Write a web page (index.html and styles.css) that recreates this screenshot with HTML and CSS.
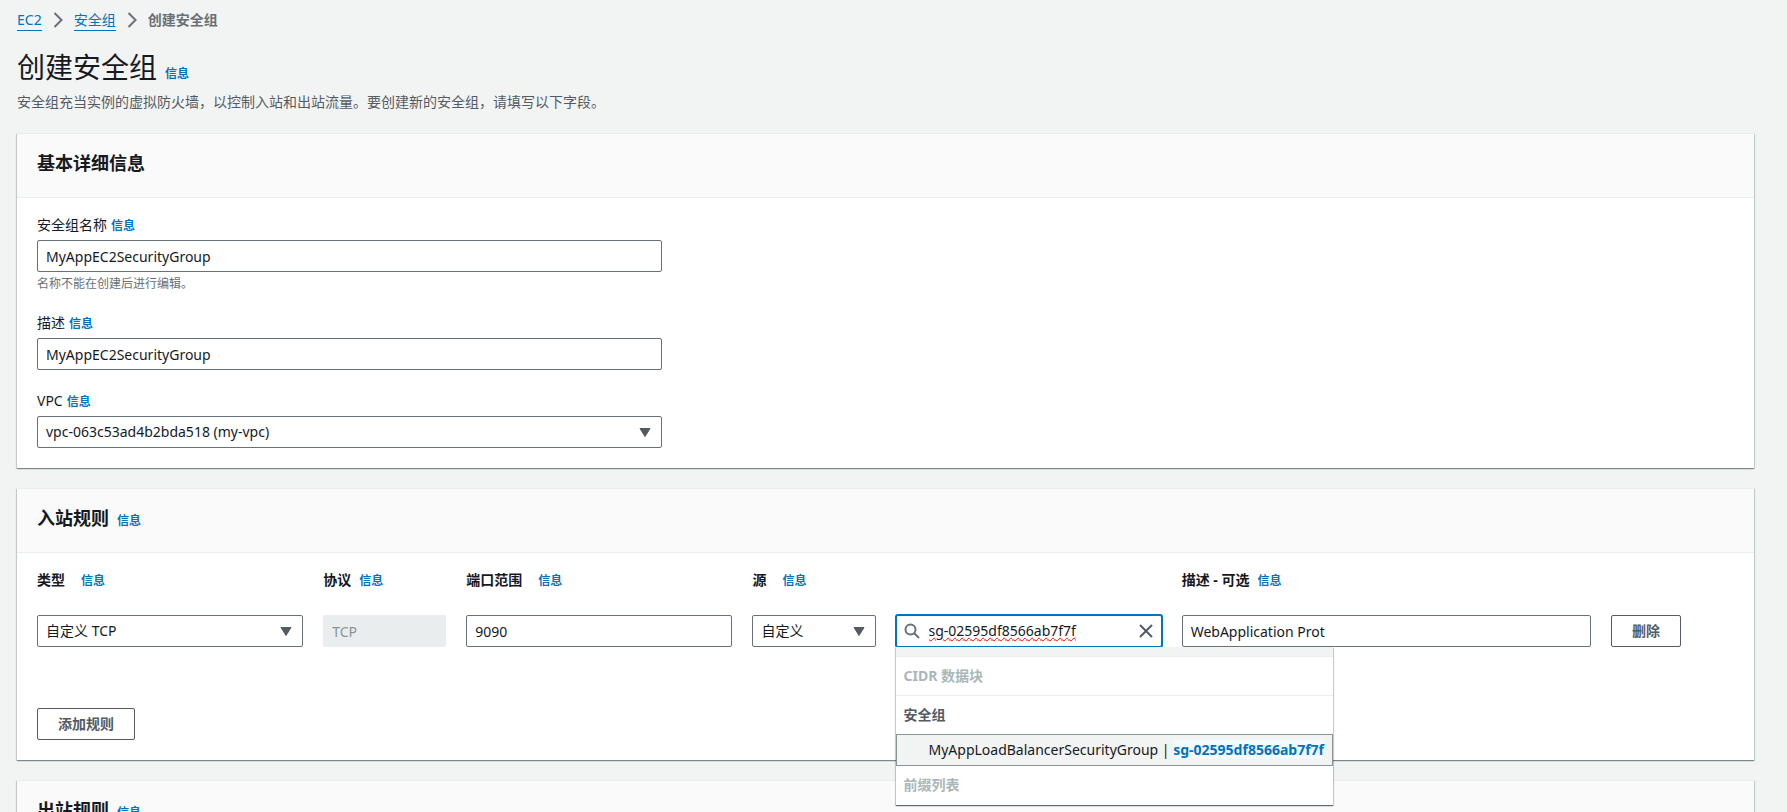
FILE: index.html
```html
<!DOCTYPE html>
<html lang="zh-CN">
  <head>
    <meta charset="UTF-8" />
    <meta name="viewport" content="width=device-width, initial-scale=1.0" />
    <title>创建安全组</title>
    <link rel="stylesheet" href="styles.css">
  </head>

  <body>
    <main class="page">
      <nav class="breadcrumb">
        <a href="#">EC2</a>
        <svg class="chevron" viewBox="0 0 10 16"><path d="M1.5 1 L8.5 8 L1.5 15" /></svg>
        <a href="#">安全组</a>
        <svg class="chevron" viewBox="0 0 10 16"><path d="M1.5 1 L8.5 8 L1.5 15" /></svg>
        <span class="current">创建安全组</span>
      </nav>

      <header class="page-header">
        <div class="title">
          <h1>创建安全组</h1>
          <a class="info" href="#">信息</a>
        </div>
        <p>安全组充当实例的虚拟防火墙，以控制入站和出站流量。要创建新的安全组，请填写以下字段。</p>
      </header>

      <section class="panel">
        <div class="panel-header">
          <h2>基本详细信息</h2>
        </div>
        <div class="panel-body details">
          <div class="form-group">
            <div class="label-row">
              <label for="group-name">安全组名称</label>
              <a class="info" href="#">信息</a>
            </div>
            <input class="control" type="text" id="group-name" value="MyAppEC2SecurityGroup" spellcheck="false" />
            <p class="hint">名称不能在创建后进行编辑。</p>
          </div>
          <div class="form-group">
            <div class="label-row">
              <label for="group-desc">描述</label>
              <a class="info" href="#">信息</a>
            </div>
            <input class="control" type="text" id="group-desc" value="MyAppEC2SecurityGroup" spellcheck="false" />
          </div>
          <div class="form-group">
            <div class="label-row">
              <label for="vpc">VPC</label>
              <a class="info" href="#">信息</a>
            </div>
            <div class="select">
              <select class="control" id="vpc">
                <option>vpc-063c53ad4b2bda518 (my-vpc)</option>
              </select>
              <svg class="caret" viewBox="0 0 12 9"><path d="M1 0.5 H11 L6 8.5 Z" /></svg>
            </div>
          </div>
        </div>
      </section>

      <section class="panel">
        <div class="panel-header">
          <h2>入站规则</h2>
          <a class="info" href="#">信息</a>
        </div>
        <div class="panel-body">
          <div class="rules">
            <div class="rule-label wide span-2">
              <label for="rule-type">类型</label>
              <a class="info" href="#">信息</a>
            </div>
            <div class="rule-label">
              <label for="rule-protocol">协议</label>
              <a class="info" href="#">信息</a>
            </div>
            <div class="rule-label wide span-2">
              <label for="rule-port">端口范围</label>
              <a class="info" href="#">信息</a>
            </div>
            <div class="rule-label wide span-3">
              <label for="rule-source">源</label>
              <a class="info" href="#">信息</a>
            </div>
            <div class="rule-label span-4">
              <label for="rule-desc">描述 - 可选</label>
              <a class="info" href="#">信息</a>
            </div>

            <div class="select span-2">
              <select class="control" id="rule-type">
                <option>自定义 TCP</option>
              </select>
              <svg class="caret" viewBox="0 0 12 9"><path d="M1 0.5 H11 L6 8.5 Z" /></svg>
            </div>
            <input class="control" type="text" id="rule-protocol" value="TCP" disabled />
            <input class="control span-2" type="text" id="rule-port" value="9090" />
            <div class="select">
              <select class="control" id="rule-source">
                <option>自定义</option>
              </select>
              <svg class="caret" viewBox="0 0 12 9"><path d="M1 0.5 H11 L6 8.5 Z" /></svg>
            </div>
            <div class="search span-2">
              <div class="search-box">
                <svg class="icon" viewBox="0 0 16 16"><circle cx="6.5" cy="6.5" r="5" /><path d="M10 10 L15 15" /></svg>
                <input type="text" id="rule-search" aria-label="源" value="sg-02595df8566ab7f7f" spellcheck="false" />
                <button class="clear" type="button" aria-label="清除">
                  <svg class="icon" viewBox="0 0 16 16"><path d="M2 2 L14 14 M14 2 L2 14" /></svg>
                </button>
              </div>
              <div class="menu" role="listbox">
                <div class="menu-strip"></div>
                <div class="menu-group muted">CIDR 数据块</div>
                <div class="menu-group">安全组</div>
                <div class="menu-option" role="option" aria-selected="true">MyAppLoadBalancerSecurityGroup | <mark>sg-02595df8566ab7f7f</mark></div>
                <div class="menu-group muted last">前缀列表</div>
              </div>
            </div>
            <input class="control span-3" type="text" id="rule-desc" value="WebApplication Prot" spellcheck="false" />
            <button class="btn" type="button">删除</button>
          </div>
          <button class="btn add-rule" type="button">添加规则</button>
        </div>
      </section>

      <section class="panel">
        <div class="panel-header">
          <h2>出站规则</h2>
          <a class="info" href="#">信息</a>
        </div>
      </section>
    </main>
  </body>
</html>
```

FILE: styles.css
```css
* {
  box-sizing: border-box;
}

body {
  margin: 0;
  background-color: #f2f3f3;
  color: #16191f;
  font-family: "Noto Sans", "Noto Sans CJK SC", sans-serif;
  font-size: 14px;
  line-height: 22px;
}

h1,
h2,
p {
  margin: 0;
}

a {
  color: #0073bb;
  text-decoration: none;
}

input,
select,
button {
  font: inherit;
  color: inherit;
}

.page {
  height: 100vh;
  overflow: hidden;
  padding: 9px 33px 0 17px;
}

/* breadcrumb */
.breadcrumb {
  display: flex;
  align-items: center;
  gap: 11px;
}

.breadcrumb a {
  line-height: 20px;
  border-bottom: 1px solid #0073bb;
}

.breadcrumb .current {
  color: #687078;
  font-weight: bold;
}

.chevron {
  width: 10px;
  height: 16px;
  fill: none;
  stroke: #687078;
  stroke-width: 2;
}

/* page title */
.page-header {
  padding: 16px 0 20px;
}

.page-header p {
  color: #545b64;
}

.title {
  display: flex;
  align-items: baseline;
  gap: 8px;
  margin-bottom: 3px;
}

h1 {
  font-size: 28px;
  font-weight: normal;
  line-height: 41px;
}

.info {
  font-size: 12px;
  font-weight: bold;
}

/* panels */
.panel {
  margin-bottom: 20px;
  background-color: #fff;
  border-top: 1px solid #eaeded;
  box-shadow: 0 1px 1px 0 rgba(0, 28, 36, 0.3),
    1px 1px 1px 0 rgba(0, 28, 36, 0.15),
    -1px 1px 1px 0 rgba(0, 28, 36, 0.15);
}

.panel-header {
  display: flex;
  align-items: baseline;
  gap: 8px;
  padding: 15px 20px 20px;
  background-color: #fafafa;
  border-bottom: 1px solid #eaeded;
}

h2 {
  font-size: 18px;
  line-height: 28px;
}

.panel-body {
  padding: 16px 20px 20px;
}

/* form fields */
.details {
  display: flex;
  flex-direction: column;
  gap: 20px;
}

.form-group {
  width: 100%;
  max-width: 625px;
}

.label-row {
  display: flex;
  align-items: baseline;
  gap: 4px;
  height: 22px;
  margin-bottom: 4px;
}

.control {
  display: block;
  width: 100%;
  height: 32px;
  padding: 0 8px;
  border: 1px solid #687078;
  border-radius: 2px;
  background-color: #fff;
}

.control:disabled {
  border-color: #eaeded;
  background-color: #eaeded;
  color: #879596;
}

.hint {
  padding-top: 4px;
  color: #687078;
  font-size: 12px;
  line-height: 16px;
}

.select {
  position: relative;
}

.select .control {
  appearance: none;
}

.caret {
  position: absolute;
  top: 12px;
  right: 11px;
  width: 12px;
  height: 9px;
  fill: #545b64;
  stroke: #545b64;
  stroke-linejoin: round;
  pointer-events: none;
}

/* inbound rules */
.rules {
  display: grid;
  grid-template-columns: repeat(12, 1fr);
  gap: 24px 20px;
}

.rules > * {
  min-width: 0;
}

.span-2 {
  grid-column: span 2;
}

.span-3 {
  grid-column: span 3;
}

.span-4 {
  grid-column: span 4;
}

.rule-label {
  display: flex;
  align-items: baseline;
  gap: 8px;
  height: 22px;
  font-weight: bold;
}

.rule-label.wide {
  gap: 16px;
}

.btn {
  justify-self: start;
  height: 32px;
  padding: 0 20px;
  border: 1px solid #545b64;
  border-radius: 2px;
  background-color: #fff;
  color: #545b64;
  font-weight: bold;
  cursor: pointer;
}

.add-rule {
  display: block;
  margin-top: 61px;
}

/* source search */
.search {
  position: relative;
}

.search-box {
  display: flex;
  align-items: center;
  height: 32px;
  padding: 0 7px;
  border: 1px solid #0073bb;
  border-radius: 2px;
  background-color: #fff;
  box-shadow: 0 0 0 1px #0073bb;
}

.search-box input {
  flex: 1;
  min-width: 0;
  padding: 0 9px;
  border: none;
  outline: none;
  background: none;
  text-decoration: underline wavy #f00 1px;
}

.icon {
  display: block;
  width: 16px;
  height: 16px;
  fill: none;
  stroke: #687078;
  stroke-width: 2;
}

.clear {
  padding: 0;
  border: none;
  background: none;
  cursor: pointer;
}

.clear .icon {
  stroke: #545b64;
}

.menu {
  position: absolute;
  top: 100%;
  left: 0;
  z-index: 10;
  background-color: #fff;
  box-shadow: 0 1px 1px 0 rgba(0, 28, 36, 0.5),
    1px 1px 1px 0 rgba(0, 28, 36, 0.15),
    -1px 1px 1px 0 rgba(0, 28, 36, 0.15);
  white-space: nowrap;
}

.menu-strip {
  height: 9px;
  background-color: #f2f3f3;
}

.menu-group {
  height: 39px;
  padding: 8px;
  border-top: 1px solid #eaeded;
  color: #545b64;
  font-weight: bold;
}

.menu-group.muted {
  color: #aab7b8;
}

.menu-group.last {
  border-top: none;
}

.menu-option {
  height: 32px;
  padding: 4px 8px 4px 32px;
  border: 1px solid #879596;
  background-color: #f2f3f3;
}

.menu-option mark {
  background-color: #f1faff;
  color: #0073bb;
  font-weight: bold;
}
```
